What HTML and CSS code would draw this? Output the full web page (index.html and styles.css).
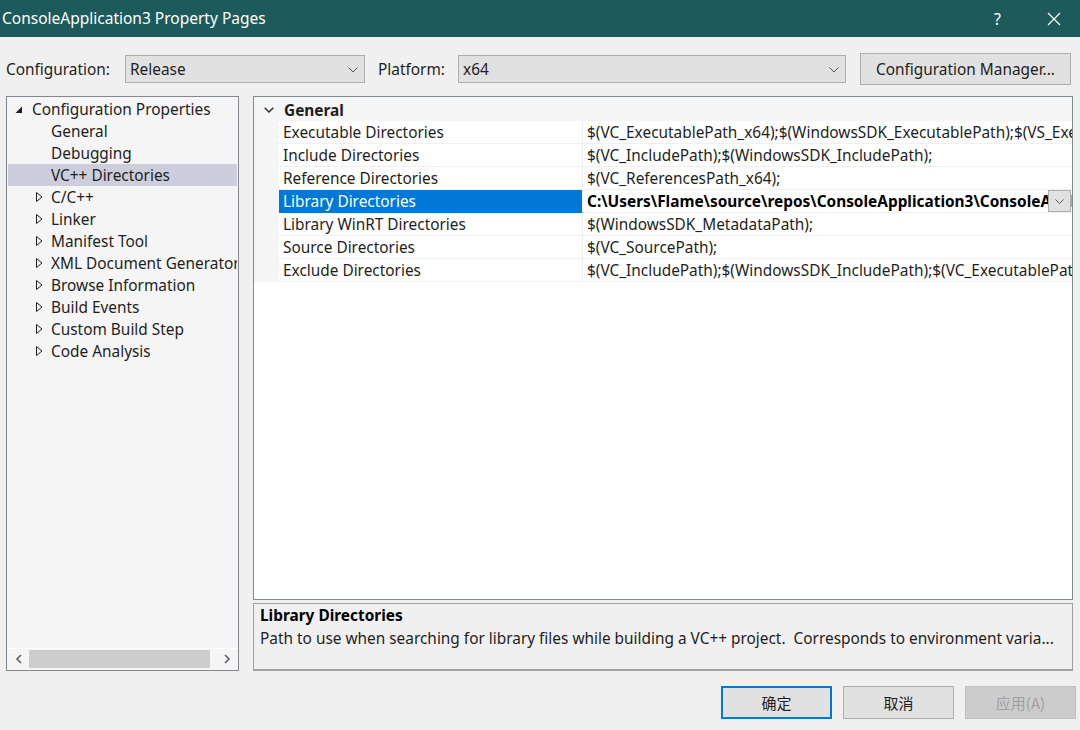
FILE: index.html
```html
<!DOCTYPE html>
<html>
<head>
<meta charset="utf-8">
<link rel="stylesheet" href="styles.css">
</head>
<body>
<div class="window">
  <div class="titlebar">
    <span class="title">ConsoleApplication3 Property Pages</span>
    <span class="tb-help">?</span>
    <span class="tb-close"><svg width="14" height="14" viewBox="0 0 14 14"><path d="M1 1L13 13M13 1L1 13" stroke="#fff" stroke-width="1.2" fill="none"/></svg></span>
  </div>

  <div class="configbar">
    <span class="lbl lbl-config">Configuration:</span>
    <div class="combo combo-config"><span>Release</span><svg class="chev" width="10" height="6" viewBox="0 0 10 6"><path d="M0.5 0.5L5 5L9.5 0.5" stroke="#555" fill="none"/></svg></div>
    <span class="lbl lbl-platform">Platform:</span>
    <div class="combo combo-platform"><span>x64</span><svg class="chev" width="10" height="6" viewBox="0 0 10 6"><path d="M0.5 0.5L5 5L9.5 0.5" stroke="#555" fill="none"/></svg></div>
    <div class="btn btn-cm">Configuration Manager...</div>
  </div>

  <div class="main">
    <div class="tree">
      <div class="tree-list">
        <div class="node root"><svg class="exp-open" width="8" height="8" viewBox="0 0 8 8"><path d="M7 0.5V7H0.5Z" fill="#1e1e1e"/></svg><span>Configuration Properties</span></div>
        <div class="node leaf"><span>General</span></div>
        <div class="node leaf"><span>Debugging</span></div>
        <div class="node leaf sel"><span>VC++ Directories</span></div>
        <div class="node child"><svg class="exp" width="7" height="10" viewBox="0 0 7 10"><path d="M0.5 0.5L6 5L0.5 9.5Z" stroke="#1e1e1e" fill="none"/></svg><span>C/C++</span></div>
        <div class="node child"><svg class="exp" width="7" height="10" viewBox="0 0 7 10"><path d="M0.5 0.5L6 5L0.5 9.5Z" stroke="#1e1e1e" fill="none"/></svg><span>Linker</span></div>
        <div class="node child"><svg class="exp" width="7" height="10" viewBox="0 0 7 10"><path d="M0.5 0.5L6 5L0.5 9.5Z" stroke="#1e1e1e" fill="none"/></svg><span>Manifest Tool</span></div>
        <div class="node child"><svg class="exp" width="7" height="10" viewBox="0 0 7 10"><path d="M0.5 0.5L6 5L0.5 9.5Z" stroke="#1e1e1e" fill="none"/></svg><span>XML Document Generator</span></div>
        <div class="node child"><svg class="exp" width="7" height="10" viewBox="0 0 7 10"><path d="M0.5 0.5L6 5L0.5 9.5Z" stroke="#1e1e1e" fill="none"/></svg><span>Browse Information</span></div>
        <div class="node child"><svg class="exp" width="7" height="10" viewBox="0 0 7 10"><path d="M0.5 0.5L6 5L0.5 9.5Z" stroke="#1e1e1e" fill="none"/></svg><span>Build Events</span></div>
        <div class="node child"><svg class="exp" width="7" height="10" viewBox="0 0 7 10"><path d="M0.5 0.5L6 5L0.5 9.5Z" stroke="#1e1e1e" fill="none"/></svg><span>Custom Build Step</span></div>
        <div class="node child"><svg class="exp" width="7" height="10" viewBox="0 0 7 10"><path d="M0.5 0.5L6 5L0.5 9.5Z" stroke="#1e1e1e" fill="none"/></svg><span>Code Analysis</span></div>
      </div>
      <div class="hscroll">
        <span class="arr"><svg width="8" height="10" viewBox="0 0 8 10"><path d="M6 1L2 5L6 9" stroke="#606060" stroke-width="1.6" fill="none"/></svg></span>
        <div class="track"><div class="thumb"></div></div>
        <span class="arr"><svg width="8" height="10" viewBox="0 0 8 10"><path d="M2 1L6 5L2 9" stroke="#606060" stroke-width="1.6" fill="none"/></svg></span>
      </div>
    </div>

    <div class="right">
      <div class="grid">
        <div class="cat">
          <span class="cat-exp"><svg width="10" height="6" viewBox="0 0 10 6"><path d="M0.7 0.7L5 5L9.3 0.7" stroke="#333" stroke-width="1.5" fill="none"/></svg></span>
          <span class="cat-name">General</span>
        </div>
        <div class="prow"><span class="gut"></span><span class="pname">Executable Directories</span><span class="pval">$(VC_ExecutablePath_x64);$(WindowsSDK_ExecutablePath);$(VS_ExecutablePath);$(MSBuild_ExecutablePath);$(FxCopDir);$(PATH);</span></div>
        <div class="prow"><span class="gut"></span><span class="pname">Include Directories</span><span class="pval">$(VC_IncludePath);$(WindowsSDK_IncludePath);</span></div>
        <div class="prow"><span class="gut"></span><span class="pname">Reference Directories</span><span class="pval">$(VC_ReferencesPath_x64);</span></div>
        <div class="prow selrow"><span class="gut"></span><span class="pname">Library Directories</span><span class="pval bold">C:\Users\Flame\source\repos\ConsoleApplication3\ConsoleApplication3\lib;$(LibraryPath)</span><span class="ddbtn"><svg width="9" height="5" viewBox="0 0 9 5"><path d="M0.5 0.5L4.5 4.5L8.5 0.5" stroke="#555" fill="none"/></svg></span></div>
        <div class="prow"><span class="gut"></span><span class="pname">Library WinRT Directories</span><span class="pval">$(WindowsSDK_MetadataPath);</span></div>
        <div class="prow"><span class="gut"></span><span class="pname">Source Directories</span><span class="pval">$(VC_SourcePath);</span></div>
        <div class="prow"><span class="gut"></span><span class="pname">Exclude Directories</span><span class="pval">$(VC_IncludePath);$(WindowsSDK_IncludePath);$(VC_ExecutablePath_x64);$(VC_LibraryPath_x64);</span></div>
      </div>
      <div class="desc">
        <div class="desc-title">Library Directories</div>
        <div class="desc-text">Path to use when searching for library files while building a VC++ project.&nbsp; Corresponds to environment varia...</div>
      </div>
    </div>
  </div>

  <div class="buttons">
    <div class="btn dlg default">确定</div>
    <div class="btn dlg">取消</div>
    <div class="btn dlg disabled">应用(A)</div>
  </div>
</div>
</body>
</html>
```

FILE: styles.css
```css
* { box-sizing: border-box; }
html, body { margin: 0; padding: 0; }
body {
  width: 1080px;
  height: 730px;
  overflow: hidden;
  background: #f0f0f0;
  font-family: "Noto Sans", "Noto Sans CJK SC", sans-serif;
  font-size: 15.4px;
  color: #1e1e1e;
}
.window { width: 1080px; height: 730px; display: flex; flex-direction: column; }

.titlebar {
  height: 37px;
  background: #1d5a5b;
  color: #fff;
  display: flex;
  align-items: center;
  padding-left: 2px;
  font-size: 15.5px;
}
.title { flex: 1; margin-top: -1px; }
.tb-help { width: 22px; font-size: 16px; margin-right: 31px; }
.tb-close { width: 14px; height: 14px; margin-right: 19px; display: flex; }

.configbar {
  height: 32px;
  margin-top: 16px;
  display: flex;
  align-items: center;
}
.lbl { white-space: nowrap; }
.lbl-config { margin-left: 6px; width: 119px; }
.lbl-platform { margin-left: 13px; width: 80px; }
.combo {
  height: 28px;
  background: #e1e1e1;
  border: 1px solid #adadad;
  display: flex;
  align-items: center;
  justify-content: space-between;
  padding: 0 6px 0 4px;
}
.combo-config { width: 240px; }
.combo-platform { width: 388px; }
.chev { margin-top: 1px; }
.btn {
  background: #e1e1e1;
  border: 1px solid #adadad;
  display: flex;
  align-items: center;
  justify-content: center;
}
.btn-cm { width: 211px; height: 32px; margin-left: 14px; }

.main {
  display: flex;
  margin-top: 11px;
  height: 575px;
}
.tree {
  margin-left: 6px;
  width: 233px;
  height: 575px;
  border: 1px solid #828790;
  background: #f5f5f5;
  display: flex;
  flex-direction: column;
}
.tree-list { flex: 1; padding: 1px 1px 0 1px; overflow: hidden; }
.node {
  height: 22px;
  display: flex;
  align-items: center;
  white-space: nowrap;
  overflow: hidden;
}
.node span { line-height: 22px; position: relative; top: 1px; }
.root { padding-left: 7px; }
.exp-open { margin-right: 9px; margin-top: 1px; flex: none; }
.leaf { padding-left: 43px; }
.child { padding-left: 28px; }
.exp { margin-right: 8px; flex: none; }
.sel { background: #cccedb; }

.hscroll {
  height: 21px;
  border-top: 1px solid #fff;
  display: flex;
  align-items: center;
  margin: 0 1px 1px 1px;
}
.arr { width: 21px; display: flex; justify-content: center; }
.track { flex: 1; height: 19px; position: relative; }
.thumb { margin-left: 0; width: 181px; height: 18px; background: #cdcdcd; }

.right {
  margin-left: 14px;
  width: 820px;
  display: flex;
  flex-direction: column;
}
.grid {
  height: 504px;
  border: 1px solid #828790;
  background: #fff;
  overflow: hidden;
}
.cat {
  height: 24px;
  background: #f5f5f5;
  display: flex;
  align-items: center;
}
.cat-exp { width: 30px; display: flex; justify-content: center; margin-top: 2px; }
.cat-name { font-weight: bold; margin-left: 0; position: relative; top: 1px; }
.prow {
  height: 23px;
  display: flex;
  white-space: nowrap;
  position: relative;
}
.gut { width: 25px; background: #f5f5f5; flex: none; }
.pname {
  width: 304px;
  flex: none;
  padding-left: 4px;
  padding-top: 1px;
  line-height: 22px;
  border-bottom: 1px solid #f0f0f0;
  border-right: 1px solid #f0f0f0;
}
.pval {
  flex: 1;
  padding-left: 4px;
  padding-top: 1px;
  line-height: 22px;
  border-bottom: 1px solid #f0f0f0;
  overflow: hidden;
  color: #1e1e1e;
}
.selrow .pname { background: #0078d7; color: #fff; border-bottom-color: #0078d7; }
.bold { font-weight: bold; color: #000; padding-right: 24px; }
.ddbtn {
  position: absolute;
  right: 1px;
  top: 0;
  width: 23px;
  height: 22px;
  background: #e1e1e1;
  border: 1px solid #adadad;
  display: flex;
  align-items: center;
  justify-content: center;
}

.desc {
  margin-top: 3px;
  height: 68px;
  border: 1px solid #a0a0a0;
  border-bottom-width: 2px;
  padding: 0 6px;
  background: #f0f0f0;
}
.desc-title { font-weight: bold; line-height: 23px; color: #000; }
.desc-text { line-height: 23px; white-space: nowrap; overflow: hidden; }

.buttons {
  display: flex;
  justify-content: flex-end;
  margin-top: 15px;
  padding-right: 4px;
  gap: 11px;
}
.dlg {
  width: 111px;
  height: 33px;
  font-family: "Noto Sans CJK SC", sans-serif;
  font-size: 15px;
}
.default { border: 2px solid #0078d7; }
.disabled { background: #cccccc; border-color: #bfbfbf; color: #a0a0a0; }
```
